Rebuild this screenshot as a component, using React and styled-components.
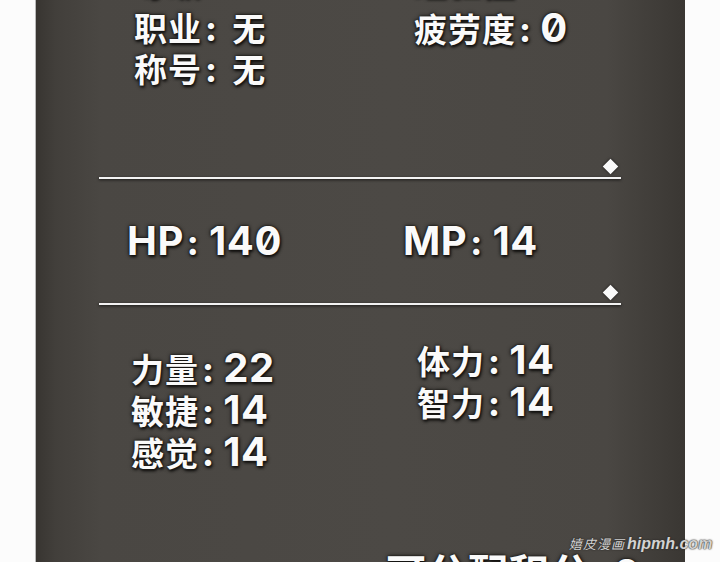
import React from 'react';
import styled, { createGlobalStyle } from 'styled-components';

const GlobalStyle = createGlobalStyle`
  html, body {
    margin: 0;
    padding: 0;
    background: #fcfcfc;
  }
  body {
    font-family: "Noto Sans CJK SC", "Noto Sans", sans-serif;
  }
`;

const Page = styled.div`
  position: relative;
  width: 720px;
  height: 562px;
  overflow: hidden;
`;

const Panel = styled.section`
  box-sizing: border-box;
  width: 650px;
  height: 562px;
  margin-left: 35px;
  padding: 0 64px 0 63px;
  border-left: 1px solid #b9b9b9;
  display: flex;
  flex-direction: column;
  color: #fafafa;
  background: linear-gradient(
    to right,
    #383531 0%,
    #423f3b 3%,
    #4a4743 10%,
    #4c4945 55%,
    #4a4743 88%,
    #3a3733 100%
  );

  & > * {
    flex-shrink: 0;
  }
`;

const TwoCol = styled.div`
  display: grid;
  grid-template-columns: ${(p) => p.$first}px 1fr;
  align-items: start;
  padding-left: ${(p) => p.$indent}px;
  margin-top: ${(p) => p.$top}px;
`;

const Column = styled.div`
  display: flex;
  flex-direction: column;
  margin-top: ${(p) => p.$shift || 0}px;
`;

const Line = styled.div`
  height: ${(p) => p.$h}px;
  line-height: ${(p) => p.$h}px;
  margin-bottom: ${(p) => p.$after || 0}px;
  white-space: pre;
  font-size: 32px;
  font-weight: 700;
  text-shadow: 0 0 2px #151311, 0 0 4px #151311, 1px 2px 3px rgba(0, 0, 0, 0.8);
`;

const Label = styled.span`
  font-family: "Noto Sans CJK SC", sans-serif;
  font-size: ${(p) => p.$size || 33}px;
  font-weight: 700;
  letter-spacing: 1px;
`;

const Num = styled.span`
  font-family: Inter, "Noto Sans", sans-serif;
  font-size: ${(p) => p.$size || 40}px;
  font-weight: 700;
  font-feature-settings: "zero" 1;
  letter-spacing: 0.5px;
`;

const Colon = styled.span`
  font-family: Inter, sans-serif;
  font-size: 34px;
  font-weight: 800;
  margin-left: 3px;
  margin-right: ${(p) => p.$after || 0}px;
`;

const Divider = styled.div`
  position: relative;
  height: 2px;
  margin-top: ${(p) => p.$top}px;
  background: #f3f3f3;
  box-shadow: 0 1px 3px rgba(0, 0, 0, 0.75);

  &::after {
    content: "";
    position: absolute;
    right: 5px;
    bottom: 7px;
    width: 11px;
    height: 11px;
    background: #fafafa;
    transform: rotate(45deg);
    box-shadow: 0 0 3px rgba(0, 0, 0, 0.7);
  }
`;

const Footer = styled.div`
  margin-top: ${(p) => p.$top}px;
  padding-left: 287px;
`;

const Watermark = styled.div`
  position: absolute;
  left: 569px;
  top: 530px;
  white-space: nowrap;
  color: #d2d2d2;
  text-shadow: 0 0 2px #2a2826, 0 0 1px #2a2826;
  font-style: italic;
`;

const MarkCn = styled.span`
  font-family: "Noto Sans CJK SC", sans-serif;
  font-size: 13px;
  letter-spacing: 1px;
`;

const MarkEn = styled.span`
  font-family: "Liberation Sans", sans-serif;
  font-size: 16px;
  font-weight: 700;
  margin-left: 2px;
`;

const Field = ({ label, value, num, h, after }) => (
  <Line $h={h} $after={after}>
    <Label>{label}</Label>
    <Colon $after={num ? 2 : 8}>:</Colon> {num ? <Num>{value}</Num> : <Label>{value}</Label>}
  </Line>
);

export default function App() {
  return (
    <Page>
      <GlobalStyle />
      <Panel>
        <TwoCol $first={280} $indent={35} $top={-40}>
          <Column>
            <Field h={41} after={6} label="等级" value="1" num />
            <Field h={41} label="职业" value="无" />
            <Field h={41} label="称号" value="无" />
          </Column>
          <Column>
            <Field h={41} after={6} label="经验值" value="0" num />
            <Field h={41} label="疲劳度" value="0" num />
          </Column>
        </TwoCol>

        <Divider $top={88} />

        <TwoCol $first={276} $indent={28} $top={38}>
          <Line $h={48}>
            <Num>HP</Num>
            <Colon $after={3}>:</Colon> <Num>140</Num>
          </Line>
          <Line $h={48}>
            <Num>MP</Num>
            <Colon $after={3}>:</Colon> <Num>14</Num>
          </Line>
        </TwoCol>

        <Divider $top={38} />

        <TwoCol $first={286} $indent={32} $top={42}>
          <Column>
            <Field h={42} label="力量" value="22" num />
            <Field h={42} label="敏捷" value="14" num />
            <Field h={42} label="感觉" value="14" num />
          </Column>
          <Column $shift={-8}>
            <Field h={42} label="体力" value="14" num />
            <Field h={42} label="智力" value="14" num />
          </Column>
        </TwoCol>

        <Footer $top={74}>
          <Line $h={48}>
            <Label $size={40}>可分配积分</Label>
            <Colon>:</Colon> <Num>0</Num>
          </Line>
        </Footer>
      </Panel>
      <Watermark>
        <MarkCn>嬉皮漫画</MarkCn>
        <MarkEn>hipmh.com</MarkEn>
      </Watermark>
    </Page>
  );
}
